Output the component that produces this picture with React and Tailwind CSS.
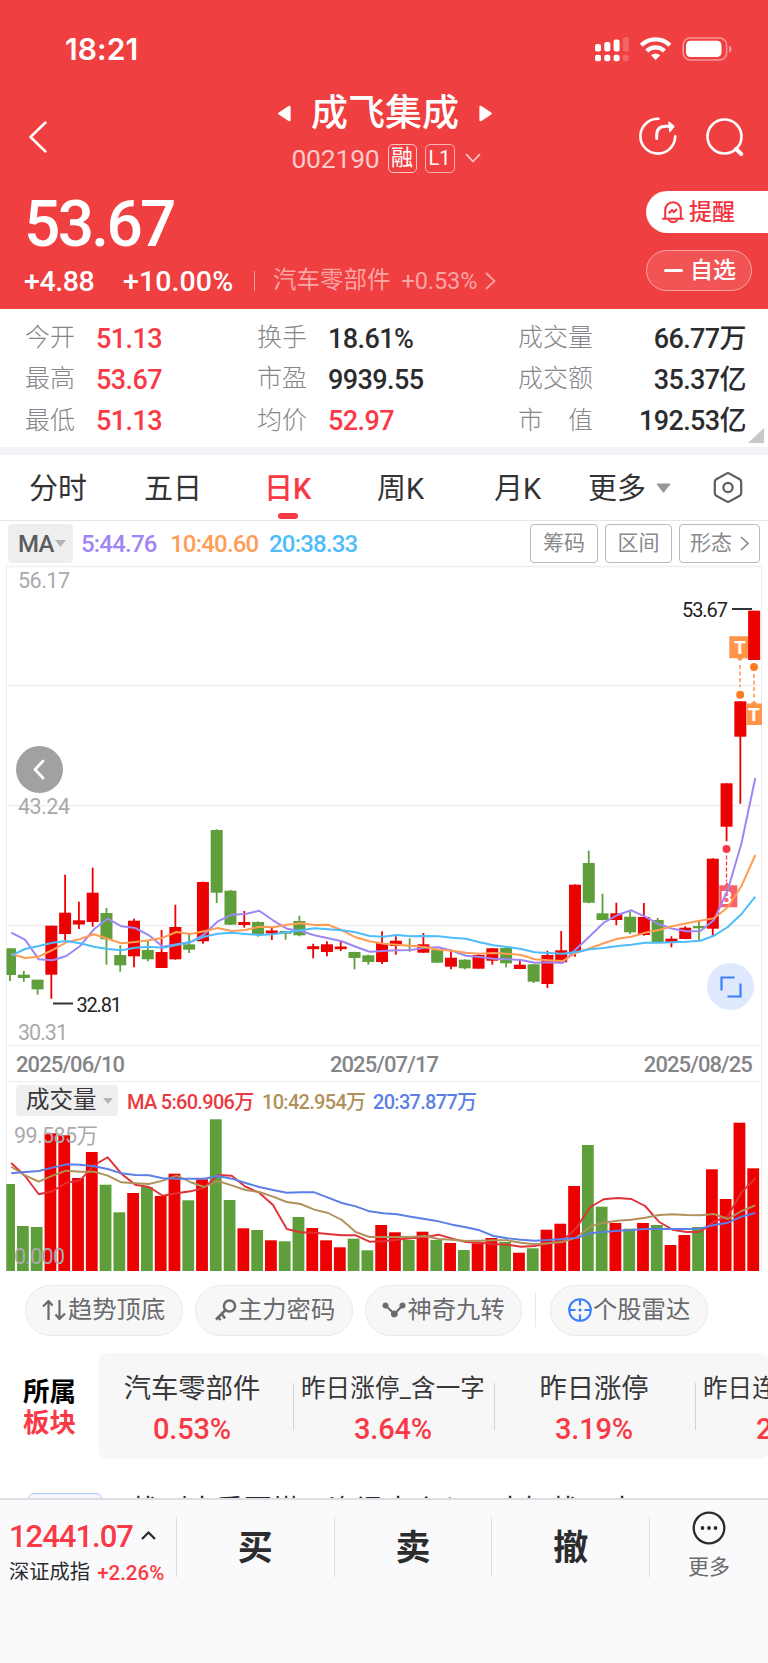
import React from 'react';

const RED = '#ec0000';
const GREEN = '#5e9f3b';
const FIRST_X = 10;
const STEP = 13.78;

// [direction, high, body top, body bottom, low, volume top]
const CANDLES = [
  ['g', 948, 948.3, 975, 981, 1184],
  ['g', 971, 974.7, 978, 981.7, 1226],
  ['g', 979.7, 979.7, 989.3, 994.7, 1227],
  ['r', 925.7, 925.7, 974.7, 998.7, 1133.3],
  ['r', 874.7, 912.7, 934, 940, 1135.3],
  ['r', 901.7, 920.3, 924.5, 929, 1178],
  ['r', 867.7, 892.7, 922, 926.7, 1152],
  ['g', 908, 913, 939.3, 964.7, 1184.7],
  ['g', 945.3, 955, 965.3, 971.7, 1212.3],
  ['r', 918.7, 920.7, 956.3, 967.3, 1193],
  ['g', 941, 950, 959.3, 961.3, 1187],
  ['r', 930, 952, 968, 968, 1196],
  ['r', 904.7, 927, 959.3, 959.7, 1173.7],
  ['g', 934, 944.3, 949.7, 953, 1200.3],
  ['r', 881.5, 882, 941.3, 943.7, 1179.3],
  ['g', 829.3, 830, 892.7, 903, 1119.3],
  ['g', 890, 890.7, 924.7, 925, 1200],
  ['r', 911, 922, 925, 927.7, 1228.3],
  ['g', 921.3, 922, 934, 936.7, 1230],
  ['r', 928, 930.5, 933.5, 940, 1240.3],
  ['g', 931, 931, 933.7, 939.7, 1241.3],
  ['g', 915.7, 921, 935.3, 936.3, 1217],
  ['r', 943.7, 946.2, 949.2, 958.3, 1228],
  ['r', 941.3, 944.3, 952, 956.3, 1240.3],
  ['r', 941, 946.5, 949.2, 951, 1247.3],
  ['g', 951.7, 952, 958, 969.3, 1238.7],
  ['g', 954.7, 955.3, 962, 964.7, 1250.3],
  ['r', 931.3, 943, 962, 964, 1225],
  ['r', 936.3, 940.7, 946, 954.7, 1232.3],
  ['g', 938.3, 945, 946.3, 951.7, 1240],
  ['r', 933, 944.3, 952.7, 952.7, 1231.7],
  ['g', 949.3, 949.7, 962.7, 963, 1240],
  ['r', 949.7, 957.7, 966.7, 969.3, 1243],
  ['g', 959.3, 959.7, 968.3, 969.3, 1250],
  ['r', 954.3, 955, 968.7, 968.7, 1243.3],
  ['r', 948, 948.3, 960.7, 964.7, 1238],
  ['g', 946, 948, 963.3, 967.3, 1242],
  ['r', 959.3, 964.7, 969, 969, 1252.7],
  ['g', 964, 964.3, 981.7, 983, 1248.3],
  ['r', 950.7, 955, 984, 988, 1229.7],
  ['r', 931, 950.3, 962.3, 963, 1223.7],
  ['r', 884.3, 884.7, 952, 956.7, 1186],
  ['g', 850.7, 863, 902.7, 903.3, 1145],
  ['g', 893.7, 913.3, 920, 920.3, 1206.7],
  ['r', 902.7, 913.3, 920, 925.3, 1223],
  ['g', 911.7, 916.7, 932.3, 934, 1228.7],
  ['r', 903, 917, 935, 935.7, 1223],
  ['g', 918, 920, 942.7, 943, 1225],
  ['r', 936.3, 938.7, 942.3, 947.3, 1245],
  ['r', 926.3, 927.7, 939, 939.3, 1235],
  ['g', 921, 926, 928.3, 941, 1227],
  ['r', 858.3, 858.7, 928.7, 936.7, 1169.3],
  ['r', 783.3, 783.3, 826.7, 841.3, 1199],
  ['r', 701.3, 701.3, 736.7, 803.7, 1122.7],
  ['r', 610.7, 610.7, 660, 660, 1168.3],
];

const PRICE_LINES = [
  {
    color: '#9f86f5',
    points: [932.7, 939.7, 959.3, 960.3, 956, 946, 929.3, 918.7, 926.3, 928, 935.3, 946.7, 944.3, 942.3, 934.3, 921.3, 914.7, 914, 910.7, 920.3, 928.7, 931, 935.3, 938.3, 941.3, 946.7, 951.7, 951, 950.3, 950, 947.7, 947.3, 950.7, 955.7, 957, 958.7, 959.3, 960, 962.7, 962.3, 963, 949, 936, 922.7, 915, 910.3, 916.7, 924.3, 928.7, 931.3, 931.3, 920, 890, 843.3, 778],
  },
  {
    color: '#ff9c56',
    points: [954, 958, 956.7, 950, 942.3, 939, 934.3, 938.7, 943.3, 942, 940.3, 937.7, 932, 934, 931.3, 928, 931, 930, 926.7, 927.3, 924.7, 923.3, 925, 924.7, 930.3, 937.3, 941.3, 943.7, 944.7, 945.7, 947, 949.7, 950.7, 952.7, 953.7, 953, 953.7, 955, 959.3, 960.3, 961, 953, 948.3, 943.3, 938.7, 936.7, 932.7, 930, 926.3, 923.3, 920.7, 918.3, 907.3, 886, 855],
  },
  {
    color: '#4fbcfb',
    points: [955.7, 949, 946, 942.7, 941, 943.3, 946.7, 949, 950.3, 947.7, 946.7, 947.7, 945, 942, 936.7, 933.7, 932.7, 934, 935, 934.3, 932.3, 930.3, 928.3, 929.3, 930.3, 932.3, 936, 936.7, 935, 936.3, 936, 936.3, 937.7, 938.7, 942.3, 945.3, 947, 949, 952.3, 953, 953.7, 952, 949.3, 948, 946, 944.7, 942.7, 942.7, 942.3, 941.7, 940.7, 935.7, 927, 914, 896.7],
  },
];

const VOLUME_LINES = [
  {
    color: '#e03136',
    points: [1163, 1176, 1194.3, 1191.3, 1182.7, 1180.3, 1165.3, 1157.3, 1173.7, 1184.7, 1187, 1195.7, 1193.3, 1191.3, 1188, 1175, 1175.7, 1186.7, 1192.7, 1205, 1229, 1232.3, 1232.7, 1234, 1235.3, 1235.3, 1241.7, 1241.3, 1239.7, 1238.3, 1237.3, 1234.7, 1238.7, 1242, 1242.7, 1244, 1244.7, 1246.7, 1246, 1243, 1240.7, 1228.3, 1207.3, 1199.3, 1198, 1199, 1206, 1221.7, 1229.7, 1232, 1231.7, 1221.7, 1216.3, 1192.3, 1178.3],
  },
  {
    color: '#b1905a',
    points: [1166.7, 1175.3, 1181.7, 1175.7, 1170.7, 1171.7, 1171.7, 1175.7, 1182.3, 1183.3, 1184, 1180.7, 1175.7, 1182, 1187, 1181, 1185.3, 1190, 1192, 1196.7, 1202, 1204, 1209.7, 1213, 1220, 1232, 1237, 1237, 1237, 1237, 1236, 1239, 1239.7, 1241, 1240.7, 1240.3, 1240.3, 1242.7, 1244.3, 1243.3, 1242, 1237.7, 1226.7, 1222.7, 1220.7, 1219.7, 1217.7, 1215, 1214.3, 1215, 1215.3, 1214, 1219, 1211, 1205.3],
  },
  {
    color: '#5c7fe6',
    points: [1173.3, 1172, 1171, 1167.7, 1164.3, 1164.7, 1166.3, 1169, 1173.3, 1175, 1175.3, 1178.3, 1178.7, 1178.7, 1178.7, 1176, 1178.7, 1183, 1187, 1190, 1192.7, 1192.3, 1192.3, 1197.7, 1203, 1206.3, 1211.3, 1213.3, 1214.3, 1216.7, 1219, 1221.3, 1224.7, 1227.3, 1230.3, 1236, 1238.3, 1239.7, 1240.7, 1240, 1239, 1238, 1233.3, 1232, 1230.7, 1230, 1229, 1228.7, 1229, 1229, 1228.7, 1225, 1222.7, 1216.7, 1213],
  },
];

const STATS = [
  ['今开', '51.13', '换手', '18.61%', '成交量', '66.77万'],
  ['最高', '53.67', '市盈', '9939.55', '成交额', '35.37亿'],
  ['最低', '51.13', '均价', '52.97', '市　值', '192.53亿'],
];

const xAt = (i) => FIRST_X + STEP * i;
const toPoints = (list) => list.map((y, i) => `${(xAt(i) + 1.2).toFixed(1)},${y}`).join(' ');

function StatusBar() {
  return (
    <div className="flex h-[98px] items-center justify-between pl-[65px] pr-[36px]">
      <span className="font-['Inter'] text-[30px] font-semibold leading-none tracking-[0.1px]">18:21</span>
      <svg width="138" height="27" viewBox="594 36 138 27" fill="#fff">
        <rect x="595" y="44" width="6" height="7.5" rx="2" />
        <rect x="604.3" y="42" width="6" height="9.5" rx="2" />
        <rect x="613.6" y="39.5" width="6" height="12" rx="2" />
        <rect x="622.8" y="37" width="6" height="14.5" rx="2" opacity="0.2" />
        <rect x="595" y="54.8" width="6" height="6.5" rx="2" />
        <rect x="604.3" y="54.8" width="6" height="6.5" rx="2" />
        <rect x="613.6" y="54.8" width="6" height="6.5" rx="2" />
        <rect x="622.8" y="54.8" width="6" height="6.5" rx="2" opacity="0.2" />
        <g fill="none" stroke="#fff" strokeWidth="4.2">
          <path d="M641.3 45.2a20.4 20.4 0 0 1 28.6 0" />
          <path d="M646.7 51a12.6 12.6 0 0 1 17.8 0" />
        </g>
        <path d="M655.6 60l-4.6-4.7a6.6 6.6 0 0 1 9.2 0z" />
        <rect x="683.2" y="38" width="43.4" height="22" rx="7" fill="none" stroke="#fff" strokeOpacity="0.45" strokeWidth="1.6" />
        <rect x="686" y="40.8" width="35.5" height="16.2" rx="4.5" />
        <path d="M729 45.5c3.4 1.2 3.4 6.2 0 7.4z" opacity="0.45" />
      </svg>
    </div>
  );
}

function TitleBar() {
  return (
    <div className="flex h-[78px] justify-between pl-[28px] pr-[24px]">
      <svg className="mt-[21px]" width="90" height="36" viewBox="0 0 90 36" fill="none" stroke="#fff" strokeWidth="2.5" strokeLinecap="round" strokeLinejoin="round">
        <path d="M17.5 3.5L2.5 18l15 14.5" />
      </svg>
      <div className="flex flex-col items-center pl-[14px]">
        <div className="flex h-[31px] items-center gap-[20px]">
          <svg width="13" height="17" viewBox="0 0 13 17" fill="#fff">
            <path d="M11 .8a1.2 1.2 0 0 1 1.6 1v13.4a1.2 1.2 0 0 1-1.6 1L.8 9.6a1.3 1.3 0 0 1 0-2z" />
          </svg>
          <span className="text-[37px] font-medium leading-none">成飞集成</span>
          <svg width="13" height="17" viewBox="0 0 13 17" fill="#fff">
            <path d="M2 .8a1.2 1.2 0 0 0-1.6 1v13.4a1.2 1.2 0 0 0 1.6 1l10.2-6.6a1.3 1.3 0 0 0 0-2z" />
          </svg>
        </div>
        <div className="ml-[2px] mt-[13px] flex h-[32px] items-center">
          <span className="pt-[2px] text-[26.5px] leading-none tracking-[-0.2px] text-[#fbc9ca]">002190</span>
          <span className="ml-[8px] flex h-[29px] w-[29px] items-center justify-center rounded-[5px] border-[1.5px] border-[#fbc9ca] text-[22px] leading-none">融</span>
          <span className="ml-[8px] flex h-[29px] w-[30px] items-center justify-center rounded-[5px] border-[1.5px] border-[#fbb4b5] text-[20px] leading-none">L1</span>
          <svg className="ml-[10px]" width="16" height="10" viewBox="0 0 16 10" fill="none" stroke="#fbc9ca" strokeWidth="1.8">
            <path d="M1 1l7 7.5L15 1" />
          </svg>
        </div>
      </div>
      <svg className="mt-[19px]" width="106" height="41" viewBox="638 117 106 41" fill="none" stroke="#fff" strokeWidth="2.6" strokeLinecap="round" strokeLinejoin="round">
        <path d="M658.5 118.8a17.4 17.4 0 1 0 16.7 17.5" />
        <path d="M656.7 138.5v-3.2q0-9 9-9h6" strokeWidth="3" />
        <path d="M668.8 122l5.2 4.5-4.2 5.2z" fill="#fff" strokeWidth="1.2" />
        <circle cx="724.5" cy="136.5" r="17" />
        <path d="M736 149l5.2 5" strokeWidth="4" />
      </svg>
    </div>
  );
}

function Quote() {
  return (
    <div className="flex h-[133px] justify-between">
      <div className="pl-[24px]">
        <div className="flex h-[94px] items-center pt-[4px] text-[64px] font-medium leading-none tracking-[-2.7px]">53.67</div>
        <div className="flex h-[22px] items-center leading-none">
          <span className="w-[99px] pt-[2px] text-[28.5px] font-medium tracking-[-0.4px]">+4.88</span>
          <span className="w-[131px] pt-[2px] text-[28.5px] font-medium tracking-[0.1px]">+10.00%</span>
          <span className="h-[20px] w-px bg-[#f79a9b]" />
          <span className="ml-[18px] text-[23.5px] text-[#f9a5a6]">汽车零部件</span>
          <span className="ml-[11px] pt-[1px] text-[23.5px] tracking-[-0.1px] text-[#f9a5a6]">+0.53%</span>
          <svg className="ml-[8px]" width="11" height="18" viewBox="0 0 11 18" fill="none" stroke="#f9a5a6" strokeWidth="1.8">
            <path d="M1 1l8.5 8L1 17" />
          </svg>
        </div>
      </div>
      <div className="w-[122px] pt-[15px]">
        <div className="flex h-[42px] items-center rounded-l-full bg-white pl-[16px] text-[23px] font-medium leading-none text-[#f5333f]">
          <svg className="mr-[5px]" width="22" height="24" viewBox="0 0 22 24" fill="none" stroke="#f5333f" strokeWidth="2" strokeLinecap="round" strokeLinejoin="round">
            <path d="M3.2 18.5V10a7.8 7.8 0 0 1 15.6 0v8.5" />
            <path d="M1 18.8h20" />
            <path d="M7 20.2c1.5 2.6 6.5 2.6 8 0" />
            <path d="M7.3 12.8l2.8-2.8 1.6 2.3 2.8-2.8" />
          </svg>
          提醒
        </div>
        <div className="mt-[17px] flex h-[41px] w-[106px] items-center rounded-full border border-[#f9a5a6] bg-[#f25456] pl-[17px] text-[23px] font-medium leading-none">
          <span className="mr-[7px] h-[2.5px] w-[19px] rounded bg-white" />
          自选
        </div>
      </div>
    </div>
  );
}

function Stats() {
  return (
    <div className="relative h-[138px] bg-white pt-[8px] leading-none">
      {STATS.map(([l1, v1, l2, v2, l3, v3], row) => (
        <div key={l1} className="grid h-[41.3px] grid-cols-[71px_161px_71px_190px_228px] items-center pl-[25px] text-[27px] font-medium tracking-[-0.6px] text-[#2c2c2e]">
          <span className="text-[25px] font-light tracking-normal text-[#86868a]">{l1}</span>
          <span className="pt-[3px] text-[#f93a46]">{v1}</span>
          <span className="text-[25px] font-light tracking-normal text-[#86868a]">{l2}</span>
          <span className={row === 2 ? 'pt-[3px] text-[#f93a46]' : 'pt-[3px]'}>{v2}</span>
          <span className="flex items-center justify-between">
            <span className="text-[25px] font-light tracking-normal text-[#86868a]">{l3}</span>
            <span className="pt-[3px]">{v3}</span>
          </span>
        </div>
      ))}
      <svg className="absolute bottom-[4px] right-[4px]" width="16" height="15" viewBox="0 0 16 15" fill="#c8c8ca">
        <path d="M16 0v15H0z" />
      </svg>
    </div>
  );
}

function Tabs() {
  return (
    <div className="flex h-[66px] items-center border-b border-[#e4e4e6] pl-[29px] text-[29px] leading-none text-[#333335]">
      <span className="w-[115px] pt-[4px]">分时</span>
      <span className="w-[120px] pt-[4px]">五日</span>
      <span className="relative w-[113px] pt-[4px] font-medium text-[#f93a46]">
        日K
        <span className="absolute left-[14px] top-[42px] h-[6px] w-[20px] rounded-full bg-[#f93a46]" />
      </span>
      <span className="w-[117px] pt-[4px]">周K</span>
      <span className="w-[94px] pt-[4px]">月K</span>
      <span className="pt-[4px]">更多</span>
      <svg className="ml-[10px]" width="15" height="10" viewBox="0 0 15 10" fill="#97979a">
        <path d="M1.3.5h12.4q1 0 .5 1L8.3 9q-.8 1-1.6 0L.8 1.5q-.5-1 .5-1z" />
      </svg>
      <svg className="ml-[42px]" width="30" height="31" viewBox="0 0 30 31" fill="none" stroke="#5c5c60" strokeWidth="2.2" strokeLinejoin="round">
        <path d="M13.5 1.6q1.5-.8 3 0l10.2 5.7q1.500.9 1.5 2.6v11.2q0 1.7-1.5 2.6l-10.2 5.7q-1.5.8-3 0l-10.2-5.7q-1.500-.9-1.5-2.6V9.9q0-1.7 1.5-2.6z" />
        <circle cx="15" cy="15.5" r="4.6" />
      </svg>
    </div>
  );
}

function MaBar() {
  return (
    <div className="flex h-[45px] items-center pl-[8px] pr-[8px] text-[24px] font-medium leading-none tracking-[-0.8px]">
      <span className="flex h-[39px] w-[65px] items-center rounded-[4px] bg-[#eeeeee] pl-[10px] text-[#5b5b5e]">
        MA
        <svg className="ml-[1px]" width="11" height="7" viewBox="0 0 11 7" fill="#b3b3b5">
          <path d="M0 0h11L5.5 7z" />
        </svg>
      </span>
      <span className="ml-[8px] w-[89px] text-[#9f86f5]">5:44.76</span>
      <span className="w-[99px] text-[#ff9c56]">10:40.60</span>
      <span className="text-[#4fbcfb]">20:38.33</span>
      <div className="ml-auto flex gap-[7px] text-[21px] font-normal tracking-normal text-[#8a8a8d]">
        <span className="flex h-[39px] w-[68px] items-center justify-center rounded-[4px] border-[1.5px] border-[#b9b9bb]">筹码</span>
        <span className="flex h-[39px] w-[67px] items-center justify-center rounded-[4px] border-[1.5px] border-[#b9b9bb]">区间</span>
        <span className="flex h-[39px] w-[81px] items-center justify-center rounded-[4px] border-[1.5px] border-[#b9b9bb]">
          形态
          <svg className="ml-[8px]" width="9" height="15" viewBox="0 0 9 15" fill="none" stroke="#8a8a8d" strokeWidth="1.6">
            <path d="M1 1l7 6.5L1 14" />
          </svg>
        </span>
      </div>
    </div>
  );
}

function CandleChart() {
  return (
    <div className="relative h-[480px] border-b border-[#ececee]">
      <svg className="overflow-visible" width="754" height="479" viewBox="7 566 754 479">
        <g stroke="#f0f0f2" strokeWidth="1.3">
          <path d="M6 566.5h756M6 685.5h756M6 805.5h756M6 925.5h756" />
        </g>
        <g fill="#aaaaac" fontSize="21.5">
          <text x="18" y="588" textLength="52">56.17</text>
          <text x="18" y="814" textLength="52">43.24</text>
          <text x="18" y="1040" textLength="50">30.31</text>
        </g>

        {/* T marker behind the last candle */}
        <g fill="#ff9548">
          <path d="M729.3 636.3h19v22h-5.3l-3 3-3-3h-7.7z" />
          <text x="740" y="654" fontSize="19" fontWeight="700" fill="#fff" textAnchor="middle">T</text>
          <path d="M740 665v22" stroke="#ff9548" strokeWidth="1.5" strokeDasharray="4 2.5" />
          <circle cx="740.2" cy="694.7" r="4" fill="#ff7d1f" />
        </g>

        {CANDLES.map(([dir, high, top, bottom, low], i) => {
          const color = dir === 'r' ? RED : GREEN;
          const x = xAt(i);
          const left = Math.max(x - 6, 6.5);
          return (
            <g key={i} fill={color}>
              <rect x={x - 0.9} y={high} width="1.8" height={low - high} />
              <rect x={left} y={top} width={x + 6 - left} height={bottom - top} />
            </g>
          );
        })}

        <path d="M719.3 885.3h5.2l2.5-3.3 2.5 3.300h7.8v22h-18z" fill="#f93a46" fillOpacity="0.8" />
        <text x="726.5" y="903.5" fontSize="18" fontWeight="700" fill="#fff" textAnchor="middle">B</text>
        <path d="M726.5 855.5v26" stroke="#f93a46" strokeWidth="1.3" strokeDasharray="4 2" />
        <circle cx="726.5" cy="849" r="4" fill="#f93a46" />

        <g fill="#ff9548">
          <circle cx="754" cy="667" r="4" fill="#ff7d1f" />
          <path d="M754 674v25" stroke="#ff9548" strokeWidth="1.5" strokeDasharray="4 2.5" />
          <path d="M746.7 703.5h4.3l3-3 3 3h5v21.5h-15.3z" />
          <text x="754" y="721" fontSize="19" fontWeight="700" fill="#fff" textAnchor="middle">T</text>
        </g>

        {PRICE_LINES.map((line) => (
          <polyline key={line.color} points={toPoints(line.points)} fill="none" stroke={line.color} strokeWidth="2" strokeLinejoin="round" />
        ))}

        <g fill="#222224" fontSize="20">
          <path d="M53 1003.5h20M732 609h20" stroke="#333335" strokeWidth="2" />
          <text x="76.5" y="1011.5" textLength="45.5">32.81</text>
          <text x="682" y="616.5" textLength="46">53.67</text>
        </g>
      </svg>

      <button className="absolute left-[9px] top-[180px] flex h-[47px] w-[47px] items-center justify-center rounded-full bg-[#a1a1a1]">
        <svg className="mr-[2px]" width="14" height="21" viewBox="0 0 14 21" fill="none" stroke="#fff" strokeWidth="2.8" strokeLinecap="round" strokeLinejoin="round">
          <path d="M11 2L3 10.5l8 8.5" />
        </svg>
      </button>
      <button className="absolute right-[7px] top-[397px] flex h-[47px] w-[47px] items-center justify-center rounded-full bg-[#dfe9fe]">
        <svg width="22" height="22" viewBox="0 0 22 22" fill="none" stroke="#3a80fa" strokeWidth="2.2">
          <path d="M1.5 14.5v-13h13M20.5 7.5v13h-13" />
        </svg>
      </button>
    </div>
  );
}

function VolumeChart() {
  return (
    <>
      <div className="flex h-[37px] items-center pl-[9px] text-[20px] font-medium leading-none">
        <span className="flex h-[31px] w-[102px] items-center rounded-[4px] bg-[#efeff0] pl-[10px] text-[23.5px] font-normal text-[#38383a]">
          成交量
          <svg className="ml-[6px]" width="10" height="6" viewBox="0 0 10 6" fill="#b3b3b5">
            <path d="M0 0h10L5 6z" />
          </svg>
        </span>
        <span className="ml-[9px] w-[135px] whitespace-nowrap pt-[3px] tracking-[-0.7px] text-[#ea3a3f]">MA 5:60.906万</span>
        <span className="w-[111px] whitespace-nowrap pt-[3px] tracking-[-0.7px] text-[#b1905a]">10:42.954万</span>
        <span className="whitespace-nowrap pt-[3px] tracking-[-0.7px] text-[#5c7fe6]">20:37.877万</span>
      </div>
      <svg className="overflow-visible" width="754" height="152" viewBox="7 1119 754 152">
        {CANDLES.map(([dir, , , , , top], i) => {
          const x = xAt(i) - 0.8;
          const left = Math.max(x - 6, 6.3);
          return <rect key={i} x={left} y={top} width={x + 5.8 - left} height={1271 - top} fill={dir === 'r' ? RED : GREEN} />;
        })}
        {VOLUME_LINES.map((line) => (
          <polyline key={line.color} points={toPoints(line.points)} fill="none" stroke={line.color} strokeWidth="1.9" strokeLinejoin="round" />
        ))}
        <g fill="#aaaaac" fontSize="21.5">
          <text x="14" y="1143" textLength="84">99.585万</text>
          <text x="14" y="1264" textLength="51">0.000</text>
        </g>
      </svg>
    </>
  );
}

function Chip({ icon, children }) {
  return (
    <div className="flex h-[51px] w-[157.5px] shrink-0 items-center rounded-full border border-[#e9e9eb] bg-[#f7f7f8] pl-[16px] text-[24.3px] leading-none text-[#6a6a6d]">
      {icon}
      {children}
    </div>
  );
}

function Chips() {
  return (
    <div className="mb-[4px] flex h-[78px] items-center pl-[25px]">
      <Chip
        icon={
          <svg className="mr-[2px] shrink-0" width="24" height="24" viewBox="0 0 24 24" fill="none" stroke="#6a6a6d" strokeWidth="2.2" strokeLinejoin="round">
            <path d="M6.5 22V3.5M1 8.5L6.5 3l4 4.5" />
            <path d="M17.5 2v18.5M23 15.5L17.5 21l-4-4.5" />
          </svg>
        }
      >
        趋势顶底
      </Chip>
      <div className="w-[12.5px]" />
      <Chip
        icon={
          <svg className="ml-[2px] shrink-0" width="24" height="24" viewBox="0 0 24 24" fill="none" stroke="#6a6a6d" strokeWidth="2.5">
            <circle cx="15.5" cy="8" r="5.6" />
            <path d="M11.500 12L2 21.5M7.5 15.5l3.5 5M4 18.5l2.5 3.5" />
          </svg>
        }
      >
        主力密码
      </Chip>
      <div className="w-[12px]" />
      <Chip
        icon={
          <svg className="mr-[2px] shrink-0" width="24" height="24" viewBox="0 0 24 24" fill="#6a6a6d" stroke="#6a6a6d">
            <path d="M4 8l8.5 8L20.5 7.5" fill="none" strokeWidth="2.2" />
            <circle cx="3.5" cy="7.5" r="2.6" />
            <circle cx="12.3" cy="16" r="3" />
            <circle cx="20.5" cy="7.5" r="2.6" />
          </svg>
        }
      >
        神奇九转
      </Chip>
      <span className="ml-[13px] mr-[14px] h-[34px] w-px bg-[#e9e9eb]" />
      <Chip
        icon={
          <svg className="ml-[1px] mr-px shrink-0" width="24" height="24" viewBox="0 0 24 24" fill="none" stroke="#3a80fa" strokeWidth="2.1">
            <circle cx="12" cy="12" r="10.8" />
            <path d="M12 1v6.5M12 16.500V23M1 12h6.5M16.5 12H23" />
            <circle cx="12" cy="12" r="1.600" fill="#3a80fa" stroke="none" />
          </svg>
        }
      >
        个股雷达
      </Chip>
    </div>
  );
}

function Sector({ name, value, small, last }) {
  return (
    <div className="relative flex w-[201px] shrink-0 flex-col items-center pr-[3px] leading-none">
      <span className={small ? 'flex h-[73px] items-center whitespace-nowrap text-[24.5px] tracking-[0.2px]' : 'flex h-[73px] items-center whitespace-nowrap text-[27.3px]'}>{name}</span>
      <span className="-mt-[11px] text-[29px] font-medium tracking-[-0.2px] text-[#f93a46]">{value}</span>
      {!last && <span className="absolute right-0 top-[30px] h-[47px] w-px bg-[#d3d3d5]" />}
    </div>
  );
}

function Sectors() {
  return (
    <div className="flex h-[106px] overflow-hidden">
      <div className="w-[99px] shrink-0 pl-[23px] pt-[23px] text-[26.5px] font-bold leading-[31px]">
        <div className="text-black">所属</div>
        <div className="text-[#f93a46]">板块</div>
      </div>
      <div className="flex w-[669px] overflow-hidden rounded-[8px] bg-[#f7f7f7] text-[#38383a]">
        <div className="-ml-[6px] flex">
          <Sector name="汽车零部件" value="0.53%" />
          <Sector name="昨日涨停_含一字" value="3.64%" small />
          <Sector name="昨日涨停" value="3.19%" />
          <Sector name="昨日连板_含一字" value="2.45%" small last />
        </div>
      </div>
    </div>
  );
}

function BottomBar() {
  return (
    <div className="flex h-[165px] border-t-2 border-[#dedee0] bg-[#fafafc] leading-none text-[#2c2c2e]">
      <div className="w-[176px] pl-[9px] pt-[21px]">
        <div className="flex items-center text-[31px] font-medium tracking-[-1px] text-[#f93a46]">
          12441.07
          <svg className="-mt-[2px] ml-[8px]" width="15" height="9" viewBox="0 0 15 9" fill="none" stroke="#2c2c2e" strokeWidth="2.2">
            <path d="M1 8l6.500-6.5L14 8" />
          </svg>
        </div>
        <div className="mt-[9px] flex items-center whitespace-nowrap text-[20.3px]">
          深证成指
          <span className="ml-[7px] pt-[2px] text-[20.5px] font-medium tracking-[0px] text-[#f93a46]">+2.26%</span>
        </div>
      </div>
      {['买', '卖', '撤'].map((label) => (
        <div key={label} className="mt-[17px] flex h-[60px] w-[157.7px] items-center justify-center border-l border-[#dcdcde] pt-[2px] text-[35px] font-bold">
          {label}
        </div>
      ))}
      <div className="mt-[17px] flex h-[60px] flex-1 flex-col items-center border-l border-[#dcdcde] text-[21px] text-[#6a6a6d]">
        <svg className="-mt-[6px] shrink-0" width="34" height="34" viewBox="0 0 34 34" fill="none" stroke="#2c2c2e" strokeWidth="2.3">
          <circle cx="17" cy="17" r="15.3" />
          <g fill="#2c2c2e" stroke="none">
            <circle cx="10.5" cy="17" r="1.9" />
            <circle cx="17" cy="17" r="1.9" />
            <circle cx="23.5" cy="17" r="1.9" />
          </g>
        </svg>
        <span className="mt-[12px]">更多</span>
      </div>
    </div>
  );
}

export default function App() {
  return (
    <div className="flex h-[1663px] w-[768px] flex-col overflow-hidden bg-white font-['Roboto','Noto_Sans_CJK_SC',sans-serif]">
      <header className="h-[309px] shrink-0 bg-[#f03f41] text-white">
        <StatusBar />
        <TitleBar />
        <Quote />
      </header>
      <Stats />
      <div className="h-[8px] bg-[#f2f3f7]" />
      <Tabs />
      <MaBar />
      <div className="mx-[6px] h-[705px] border-x border-[#ececee]">
        <CandleChart />
        <div className="flex h-[36px] items-center justify-between border-b border-[#ececee] pl-[9px] pr-[9px] pt-[3px] text-[22px] font-medium leading-none tracking-[-0.9px] text-[#858588]">
          <span>2025/06/10</span>
          <span>2025/07/17</span>
          <span>2025/08/25</span>
        </div>
        <VolumeChart />
      </div>
      <Chips />
      <Sectors />
      {/* news row, mostly hidden behind the trade bar */}
      <div className="flex h-[39px] overflow-hidden pl-[28px] pt-[34px]">
        <span className="h-[36px] w-[74px] shrink-0 rounded-[6px] border-[1.5px] border-[#a9c9ff] bg-[#f3f8ff]" />
        <span className="ml-[30px] whitespace-nowrap text-[28px] leading-[36px] text-[#2c2c2e]">找到大重要塔，资讯大介入，大智找，大</span>
      </div>
      <BottomBar />
    </div>
  );
}
